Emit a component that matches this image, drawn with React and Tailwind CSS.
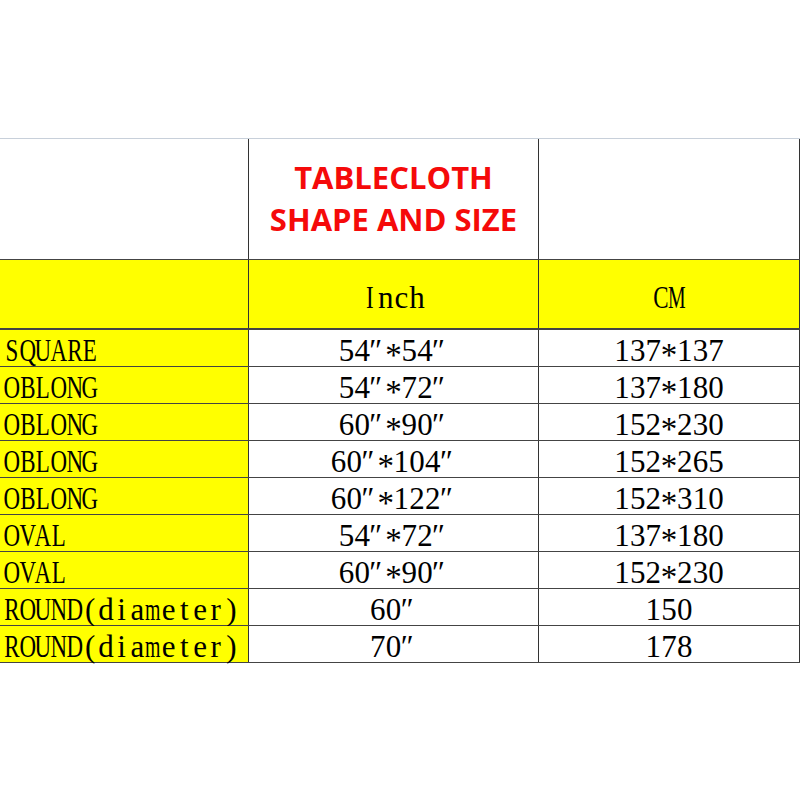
import React from "react";

const rows = [
  ["SQUARE", "54″*54″", "137*137"],
  ["OBLONG", "54″*72″", "137*180"],
  ["OBLONG", "60″*90″", "152*230"],
  ["OBLONG", "60″*104″", "152*265"],
  ["OBLONG", "60″*122″", "152*310"],
  ["OVAL", "54″*72″", "137*180"],
  ["OVAL", "60″*90″", "152*230"],
  ["ROUND(diameter)", "60″", "150"],
  ["ROUND(diameter)", "70″", "178"],
];

// SimSun-like look: every char sits in a half-width box, wide letters squeezed
function Glyphs({ text }) {
  return (
    <span className="inline-flex">
      {text.split("").map((ch, i) => {
        let cls = "inline-flex justify-center w-[15.7px]";
        if (/[A-Z]/.test(ch)) cls = "inline-flex justify-center w-[15.7px] scale-x-[0.74]";
        if (/[MmWw]/.test(ch)) cls = "inline-flex justify-center w-[15.7px] scale-x-[0.64]";
        if (ch === "*") cls = "inline-flex justify-center w-[15.7px] leading-[20px] pt-[10px] text-[33px]";
        if (ch === "″") cls = "inline-flex justify-center w-[15.7px] -translate-x-[2px]";
        return (
          <span key={i} className={cls}>
            {ch}
          </span>
        );
      })}
    </span>
  );
}

export default function App() {
  return (
    <div className="w-[800px] h-[800px] bg-white pt-[138px] font-['Liberation_Serif',serif] text-[31px] text-black">
      <div className="border-t border-[#c8d0da]">
        <div className="grid grid-cols-[249px_290px_261px] h-[121px] border-b border-[#444]">
          <div className="border-r border-[#333]"></div>
          <div className="border-r border-[#333] flex flex-col items-center justify-center pb-[3px] font-['Open_Sans',sans-serif] font-bold text-[31px] leading-[42px] text-[#f50a0a]">
            <div>TABLECLOTH</div>
            <div>SHAPE AND SIZE</div>
          </div>
          <div className="border-r border-[#333]"></div>
        </div>
        <div className="grid grid-cols-[249px_290px_261px] h-[70px] bg-[#ffff00] border-b-2 border-[#444] leading-none">
          <div className="border-r border-[#333]"></div>
          <div className="border-r border-[#333] flex items-center justify-center pt-[6px]">
            <Glyphs text="Inch" />
          </div>
          <div className="border-r border-[#333] flex items-center justify-center pt-[6px]">
            <Glyphs text="CM" />
          </div>
        </div>
        {rows.map((r, i) => (
          <div
            key={i}
            className="grid grid-cols-[249px_290px_261px] h-[37px] border-b border-[#444] leading-none"
          >
            <div className="border-r border-[#333] bg-[#ffff00] flex items-center pl-[4px] pt-[4px]">
              <Glyphs text={r[0]} />
            </div>
            <div className="border-r border-[#333] flex items-center justify-center pt-[4px]">
              <Glyphs text={r[1]} />
            </div>
            <div className="border-r border-[#333] flex items-center justify-center pt-[4px]">
              <Glyphs text={r[2]} />
            </div>
          </div>
        ))}
      </div>
    </div>
  );
}
